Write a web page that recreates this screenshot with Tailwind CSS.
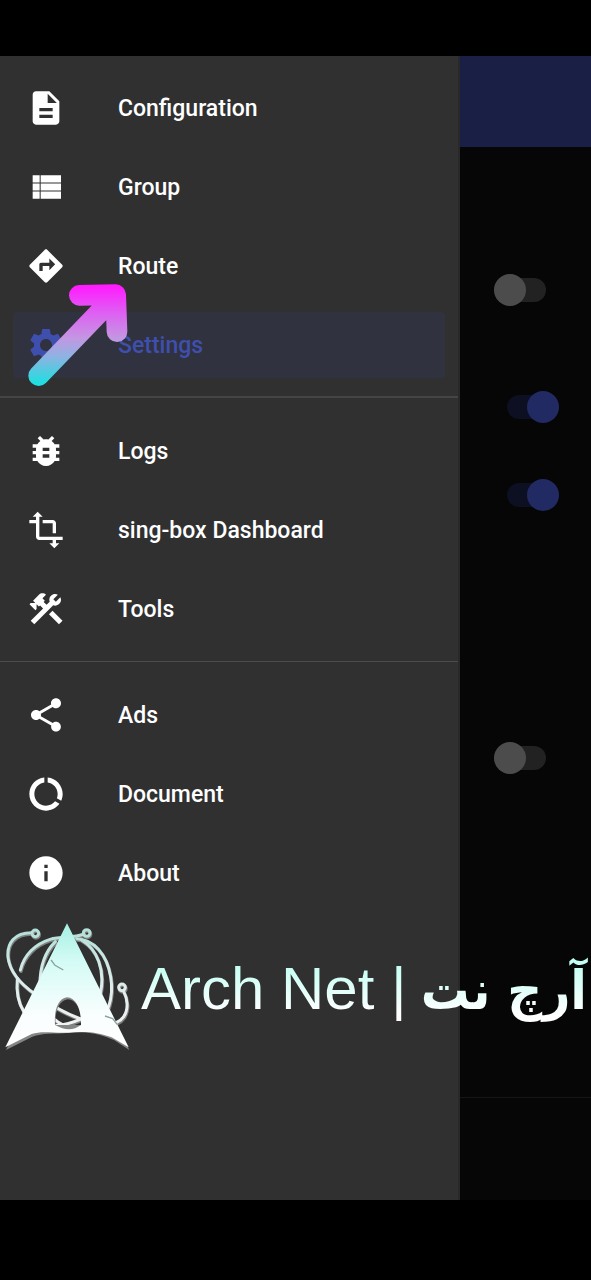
<!DOCTYPE html>
<html lang="en">
<head>
<meta charset="utf-8">
<meta name="viewport" content="width=device-width, initial-scale=1">
<title>Arch Net</title>
<script src="https://cdn.jsdelivr.net/npm/@tailwindcss/browser@4"></script>
</head>
<body class="bg-black font-['Roboto',sans-serif] text-white">
<div class="relative flex min-h-screen flex-col py-14">
  <div class="mb-6 flex flex-1">
    <!-- Navigation drawer -->
    <nav class="w-[460px] shrink-0 border-r-2 border-[#292929] bg-[#303030] pt-[19px] text-[23px] leading-7 font-medium" aria-label="Main">
      <ul class="flex flex-col gap-[13px] px-[13px] pb-[18px]">
        <li><a href="#" class="flex h-[66px] items-center gap-[52px] px-[13px]">
          <svg class="size-10 fill-current" viewBox="0 0 24 24" aria-hidden="true"><path d="M14 2H6c-1.100 0-1.990.9-1.990 2L4 20c0 1.100.89 2 1.990 2H18c1.100 0 2-.9 2-2V8l-6-6zm2 16H8v-2h8v2zm0-4H8v-2h8v2zm-3-5V3.500L18.500 9H13z"/></svg>
          <span class="pt-0.5">Configuration</span></a></li>
        <li><a href="#" class="flex h-[66px] items-center gap-[52px] px-[13px]">
          <svg class="size-10 fill-current" viewBox="0 0 24 24" aria-hidden="true"><path d="M4 5h4.200v4.300H4zM4 9.900h4.200v4.200H4zM4 14.700h4.200V19H4zM8.800 5H21v4.300H8.800zM8.800 9.900H21v4.200H8.800zM8.800 14.700H21V19H8.800z"/></svg>
          <span class="pt-0.5">Group</span></a></li>
        <li><a href="#" class="flex h-[66px] items-center gap-[52px] px-[13px]">
          <svg class="size-10 fill-current" viewBox="0 0 24 24" aria-hidden="true"><path d="M21.710 11.290l-9-9c-.39-.39-1.020-.39-1.410 0l-9 9c-.39.39-.39 1.020 0 1.410l9 9c.39.39 1.020.39 1.410 0l9-9c.39-.38.39-1.010 0-1.410zM14 14.500V12h-4v3H8v-4c0-.55.45-1 1-1h5V7.500l3.500 3.500-3.500 3.500z"/></svg>
          <span class="pt-0.5">Route</span></a></li>
        <li><a href="#" aria-current="page" class="flex h-[66px] items-center gap-[52px] rounded-sm bg-[#30323f] px-[13px] text-[#3f4fae]">
          <svg class="size-10 fill-current" viewBox="0 0 24 24" aria-hidden="true"><path d="M19.140 12.940c.04-.3.06-.61.06-.94 0-.32-.02-.64-.07-.94l2.030-1.580c.18-.14.23-.41.12-.61l-1.920-3.320c-.12-.22-.37-.29-.59-.22l-2.390.96c-.5-.38-1.030-.7-1.620-.94l-.36-2.540c-.04-.24-.24-.41-.48-.41h-3.840c-.24 0-.43.17-.47.41l-.36 2.540c-.59.24-1.130.57-1.620.94l-2.390-.96c-.22-.08-.47 0-.59.22L2.740 8.870c-.12.21-.08.47.12.61l2.030 1.580c-.05.3-.09.63-.09.94s.02.64.07.94l-2.030 1.580c-.18.14-.23.41-.12.61l1.920 3.320c.12.22.37.29.59.22l2.390-.96c.5.38 1.030.7 1.620.94l.36 2.540c.05.24.24.41.48.41h3.840c.24 0 .44-.17.47-.41l.36-2.540c.59-.24 1.130-.56 1.620-.94l2.390.96c.22.08.47 0 .59-.22l1.920-3.320c.12-.22.07-.47-.12-.61l-2.010-1.580zM12 15.600c-1.980 0-3.600-1.620-3.600-3.600s1.620-3.600 3.600-3.600 3.600 1.620 3.600 3.600-1.620 3.600-3.600 3.600z"/></svg>
          <span class="pt-0.5">Settings</span></a></li>
      </ul>
      <ul class="flex flex-col gap-[13px] border-t-2 border-[#454545] px-[13px] pt-5 pb-[19px]">
        <li><a href="#" class="flex h-[66px] items-center gap-[52px] px-[13px]">
          <svg class="size-10 fill-current" viewBox="0 0 24 24" aria-hidden="true"><path d="M20 8h-2.810c-.45-.78-1.070-1.450-1.820-1.960L17 4.410 15.590 3l-2.170 2.170C12.960 5.060 12.490 5 12 5c-.49 0-.96.06-1.410.17L8.410 3 7 4.410l1.620 1.630C7.880 6.550 7.260 7.220 6.810 8H4v2h2.090c-.05.33-.09.66-.09 1v1H4v2h2v1c0 .34.04.67.09 1H4v2h2.810c1.040 1.790 2.970 3 5.190 3s4.150-1.210 5.190-3H20v-2h-2.090c.05-.33.09-.66.09-1v-1h2v-2h-2v-1c0-.34-.04-.67-.09-1H20V8zm-6 8h-4v-2h4v2zm0-4h-4v-2h4v2z"/></svg>
          <span class="pt-0.5">Logs</span></a></li>
        <li><a href="#" class="flex h-[66px] items-center gap-[52px] px-[13px]">
          <svg class="size-10 fill-current" viewBox="0 0 24 24" aria-hidden="true"><path d="M22 18v-2H8V4h2L7 1 4 4h2v2H2v2h4v8c0 1.100.9 2 2 2h8v2h-2l3 3 3-3h-2v-2h4zM10 8h6v6h2V8c0-1.100-.9-2-2-2h-6v2z"/></svg>
          <span class="pt-0.5">sing-box Dashboard</span></a></li>
        <li><a href="#" class="flex h-[66px] items-center gap-[52px] px-[13px]">
          <svg class="size-10 fill-current" viewBox="0 0 24 24" aria-hidden="true"><rect x="16.340" y="12.870" width="3" height="8.480" transform="matrix(.7071 -.7071 .7071 .7071 -6.8717 17.6255)"/><path d="M17.500 10c1.930 0 3.500-1.570 3.500-3.500 0-.58-.16-1.120-.41-1.600l-2.700 2.700L16.400 6.110l2.700-2.700C18.620 3.160 18.080 3 17.500 3 15.570 3 14 4.570 14 6.500c0 .41.08.8.21 1.160l-1.850 1.850-1.780-1.780.71-.71L9.880 5.610 12 3.490c-1.170-1.170-3.070-1.170-4.240 0L4.220 7.030l1.410 1.410H2.810L2.100 9.150l3.540 3.540.71-.71V9.150l1.410 1.410.71-.71 1.780 1.780-7.410 7.410 2.120 2.120L16.340 9.790C16.700 9.920 17.090 10 17.500 10z"/></svg>
          <span class="pt-0.5">Tools</span></a></li>
      </ul>
      <ul class="flex flex-col gap-[13px] border-t border-[#4c4c4c] px-[13px] pt-5">
        <li><a href="#" class="flex h-[66px] items-center gap-[52px] px-[13px]">
          <svg class="size-10 fill-current" viewBox="0 0 24 24" aria-hidden="true"><path d="M18 16.080c-.76 0-1.440.3-1.960.77L8.910 12.700c.05-.23.09-.46.09-.7s-.04-.47-.09-.7l7.050-4.110c.54.5 1.250.81 2.040.81 1.660 0 3-1.340 3-3s-1.340-3-3-3-3 1.340-3 3c0 .24.04.47.09.7L8.040 9.810C7.500 9.310 6.790 9 6 9c-1.660 0-3 1.340-3 3s1.340 3 3 3c.79 0 1.500-.31 2.040-.81l7.120 4.160c-.05.21-.08.43-.08.65 0 1.610 1.310 2.920 2.920 2.920 1.610 0 2.920-1.310 2.920-2.920s-1.310-2.920-2.920-2.920z"/></svg>
          <span class="pt-0.5">Ads</span></a></li>
        <li><a href="#" class="flex h-[66px] items-center gap-[52px] px-[13px]">
          <svg class="size-10 fill-current" viewBox="0 0 24 24" aria-hidden="true"><path d="M13 2.050v3.030c3.390.49 6 3.390 6 6.920 0 .9-.18 1.750-.48 2.540l2.600 1.530c.56-1.240.88-2.620.88-4.070 0-5.180-3.950-9.450-9-9.950zM12 19c-3.870 0-7-3.130-7-7 0-3.530 2.610-6.430 6-6.920V2.050c-5.060.5-9 4.760-9 9.950 0 5.520 4.470 10 9.990 10 3.310 0 6.240-1.610 8.060-4.090l-2.600-1.530C16.170 17.980 14.210 19 12 19z"/></svg>
          <span class="pt-0.5">Document</span></a></li>
        <li><a href="#" class="flex h-[66px] items-center gap-[52px] px-[13px]">
          <svg class="size-10 fill-current" viewBox="0 0 24 24" aria-hidden="true"><path d="M12 2C6.480 2 2 6.480 2 12s4.480 10 10 10 10-4.480 10-10S17.520 2 12 2zm1 15h-2v-6h2v6zm0-8h-2V7h2v2z"/></svg>
          <span class="pt-0.5">About</span></a></li>
      </ul>
    </nav>

    <!-- Dimmed settings screen behind the drawer -->
    <main class="flex flex-1 flex-col bg-[#060606]">
      <header class="h-[91px] bg-[#1a2045]"></header>
      <div class="mt-[131px] flex flex-col items-end pr-8">
        <input type="checkbox" aria-label="Option 1" class="relative mr-[13px] h-6 w-[52px] appearance-none rounded-full bg-[#222] before:absolute before:-top-1 before:left-0 before:size-8 before:rounded-full before:bg-[#4c4c4c]">
        <input type="checkbox" checked aria-label="Option 2" class="relative mt-[93px] h-6 w-[52px] appearance-none rounded-full bg-[#0d1022] before:absolute before:-top-1 before:right-0 before:size-8 before:rounded-full before:bg-[#212a63]">
        <input type="checkbox" checked aria-label="Option 3" class="relative mt-16 h-6 w-[52px] appearance-none rounded-full bg-[#0d1022] before:absolute before:-top-1 before:right-0 before:size-8 before:rounded-full before:bg-[#212a63]">
        <input type="checkbox" aria-label="Option 4" class="relative mt-[239px] mr-[13px] h-6 w-[52px] appearance-none rounded-full bg-[#222] before:absolute before:-top-1 before:left-0 before:size-8 before:rounded-full before:bg-[#4c4c4c]">
      </div>
      <hr class="mt-[327px] border-[#151515]">
    </main>
  </div>

  <!-- Pointer arrow over the drawer -->
  <svg class="pointer-events-none absolute top-[280px] left-[23px] size-[110px]" viewBox="69 150 330 330" fill="none" aria-hidden="true">
    <defs><linearGradient id="arrow" gradientUnits="userSpaceOnUse" x1="240" y1="170" x2="240" y2="460">
      <stop offset="0" stop-color="#ff1cff"/><stop offset=".28" stop-color="#dd62f2"/><stop offset=".53" stop-color="#c496e2"/><stop offset=".72" stop-color="#8fb2e2"/><stop offset="1" stop-color="#1fdfe0"/>
    </linearGradient></defs>
    <path d="M116 437 330 214M238 196 347 194 351 305" stroke="url(#arrow)" stroke-width="62" stroke-linecap="round" stroke-linejoin="round"/>
  </svg>

  <!-- Brand watermark -->
  <div class="pointer-events-none absolute inset-x-0 top-[920px] flex h-[140px] items-center">
    <svg class="h-[140px] w-[141px] shrink-0" viewBox="0 30 423 420" fill="none" aria-hidden="true">
      <defs>
        <linearGradient id="mark" x1="0" y1="0" x2="0" y2="1"><stop offset="0" stop-color="#a5f0e2"/><stop offset=".3" stop-color="#d3fbf5"/><stop offset=".75" stop-color="#fafefe"/><stop offset="1" stop-color="#fff"/></linearGradient>
        <linearGradient id="ring" gradientUnits="userSpaceOnUse" x1="0" y1="60" x2="0" y2="350"><stop offset="0" stop-color="#b4dfd8"/><stop offset=".5" stop-color="#d9ecea"/><stop offset="1" stop-color="#f2f2f2"/></linearGradient>
        <g id="orbits" stroke-linecap="round">
          <path d="M94 68C45 68 20 98 24 142 30 190 65 224 105 252 145 280 195 310 240 326 300 350 350 350 371 320 387 296 382 265 371 244"/>
          <path d="M248 73C222 84 185 78 150 88 105 102 72 135 61 180"/>
          <path d="M52 205C48 245 54 278 72 306"/>
          <path d="M230 86C280 88 320 130 332 200 338 235 334 265 326 290"/>
          <path d="M166 95C130 130 118 180 120 236M245 90C292 118 315 180 302 245M162 347C195 347 220 337 248 325M160 325C190 352 220 360 252 352"/>
          <circle cx="106" cy="70" r="10"/><circle cx="260" cy="69" r="10"/><circle cx="366" cy="232" r="10"/>
        </g>
      </defs>
      <use href="#orbits" stroke="#808080" stroke-width="10" transform="translate(2 4)"/>
      <use href="#orbits" stroke="url(#ring)" stroke-width="9"/>
      <path fill="#858585" fill-rule="evenodd" transform="translate(2 6)" d="M201 40 386 414 340 384C310 372 270 356 205 362 160 366 125 362 95 374L16 414ZM165 339 243 339C244 304 232 264 201 262 174 266 162 300 165 339Z"/>
      <path fill="url(#mark)" fill-rule="evenodd" d="M201 40 386 412 335 382C300 368 260 362 205 368 160 370 125 361 95 372L16 412ZM165 345C195 362 220 362 243 345 244 304 232 264 201 262 174 266 162 300 165 345Z"/>
      <path d="M153 150 165 166 190 180M315 318 338 326 352 344" stroke="#87a39f" stroke-width="4"/>
    </svg>
    <p class="flex flex-1 items-baseline justify-between bg-linear-to-b from-[#c4fff3] from-30% to-white to-70% bg-clip-text pr-1 leading-[120px] whitespace-nowrap text-transparent">
      <span class="font-['Liberation_Sans',sans-serif] text-[60px]">Arch Net |</span>
      <span lang="fa" dir="rtl" class="font-['DejaVu_Sans_Condensed','DejaVu_Sans',sans-serif] text-[54px] font-bold">آرچ نت</span>
    </p>
  </div>
</div>
</body>
</html>
